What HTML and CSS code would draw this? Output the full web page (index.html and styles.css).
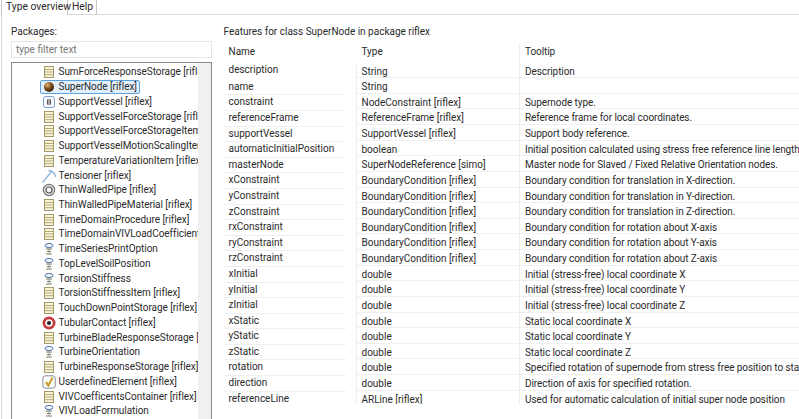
FILE: index.html
```html
<!DOCTYPE html>
<html>
<head>
<meta charset="utf-8">
<title>Type overview</title>
<link rel="stylesheet" href="styles.css">
</head>
<body>
<svg class="defs" width="0" height="0">
  <symbol id="i-store" viewBox="0 0 14 14"><rect x="2.5" y="1.5" width="9" height="11" fill="#f8f4dc" stroke="#a39a68"/><path d="M3 4.5h8M3 7h8M3 9.7h8" stroke="#b5a970"/></symbol>
  <symbol id="i-ball" viewBox="0 0 14 14"><defs><radialGradient id="g1" cx=".35" cy=".3" r=".8"><stop offset="0" stop-color="#e8b878"/><stop offset=".5" stop-color="#7a4a18"/><stop offset="1" stop-color="#2c1a08"/></radialGradient></defs><circle cx="7" cy="7" r="5" fill="url(#g1)"/></symbol>
  <symbol id="i-b" viewBox="0 0 14 14"><rect x="1.5" y="1.5" width="11" height="11" rx="2" fill="#f4f7fc" stroke="#7d9fcc"/><rect x="5" y="4.5" width="4" height="5" fill="#555"/><rect x="6" y="5.5" width="2" height="1" fill="#fff"/><rect x="6" y="7.5" width="2" height="1" fill="#fff"/></symbol>
  <symbol id="i-enum" viewBox="0 0 14 14"><ellipse cx="7" cy="3.5" rx="4" ry="2" fill="#fff" stroke="#3f6fa8"/><path d="M4 7h6M5 9.5h4M4 12h6" stroke="#7b7a50" stroke-width="1.2"/><path d="M7 5.5v6" stroke="#8c9cb0"/></symbol>
  <symbol id="i-tens" viewBox="0 0 14 14"><path d="M.5 13.5L10 2M6.5 1.5c2 0 4 .5 5.5 2.5s1.5 3 1.5 4" stroke="#8fb2d8" stroke-width="1.3" fill="none"/></symbol>
  <symbol id="i-pipe" viewBox="0 0 14 14"><circle cx="7" cy="7" r="5.6" fill="#e4e4e4" stroke="#777" stroke-width="1.2"/><circle cx="7" cy="7" r="3" fill="#fff" stroke="#555" stroke-width="1.2"/></symbol>
  <symbol id="i-tub" viewBox="0 0 14 14"><circle cx="7" cy="7" r="6.5" fill="#c63a3a"/><circle cx="7" cy="7" r="3.8" fill="#f2f2f2"/><circle cx="7" cy="7" r="2" fill="#222"/></symbol>
  <symbol id="i-check" viewBox="0 0 14 14"><rect x=".8" y=".8" width="12.4" height="12.4" rx="2.5" fill="#fbfbfb" stroke="#8a8a8a"/><path d="M4 7l2.3 3.6L10.5 2.6" fill="none" stroke="#c49a18" stroke-width="2"/></symbol>
</svg>
<nav class="tabs"><span class="tab active">Type overview</span><span class="tab">Help</span></nav>
<main class="page">
  <section class="left">
    <div class="label">Packages:</div>
    <div class="filter">type filter text</div>
    <div class="tree-frame">
      <ul class="tree">
        <li><svg class="ico"><use href="#i-store"/></svg><span>SumForceResponseStorage [riflex]</span></li>
        <li class="sel"><div class="sel-box"><svg class="ico"><use href="#i-ball"/></svg><span>SuperNode [riflex]</span></div></li>
        <li><svg class="ico"><use href="#i-b"/></svg><span>SupportVessel [riflex]</span></li>
        <li><svg class="ico"><use href="#i-store"/></svg><span>SupportVesselForceStorage [riflex]</span></li>
        <li><svg class="ico"><use href="#i-store"/></svg><span>SupportVesselForceStorageItem [riflex]</span></li>
        <li><svg class="ico"><use href="#i-store"/></svg><span>SupportVesselMotionScalingItem [riflex]</span></li>
        <li><svg class="ico"><use href="#i-store"/></svg><span>TemperatureVariationItem [riflex]</span></li>
        <li><svg class="ico"><use href="#i-tens"/></svg><span>Tensioner [riflex]</span></li>
        <li><svg class="ico"><use href="#i-pipe"/></svg><span>ThinWalledPipe [riflex]</span></li>
        <li><svg class="ico"><use href="#i-store"/></svg><span>ThinWalledPipeMaterial [riflex]</span></li>
        <li><svg class="ico"><use href="#i-store"/></svg><span>TimeDomainProcedure [riflex]</span></li>
        <li><svg class="ico"><use href="#i-store"/></svg><span>TimeDomainVIVLoadCoefficient [riflex]</span></li>
        <li><svg class="ico"><use href="#i-enum"/></svg><span>TimeSeriesPrintOption</span></li>
        <li><svg class="ico"><use href="#i-enum"/></svg><span>TopLevelSoilPosition</span></li>
        <li><svg class="ico"><use href="#i-enum"/></svg><span>TorsionStiffness</span></li>
        <li><svg class="ico"><use href="#i-store"/></svg><span>TorsionStiffnessItem [riflex]</span></li>
        <li><svg class="ico"><use href="#i-store"/></svg><span>TouchDownPointStorage [riflex]</span></li>
        <li><svg class="ico"><use href="#i-tub"/></svg><span>TubularContact [riflex]</span></li>
        <li><svg class="ico"><use href="#i-store"/></svg><span>TurbineBladeResponseStorage [riflex]</span></li>
        <li><svg class="ico"><use href="#i-enum"/></svg><span>TurbineOrientation</span></li>
        <li><svg class="ico"><use href="#i-store"/></svg><span>TurbineResponseStorage [riflex]</span></li>
        <li><svg class="ico"><use href="#i-check"/></svg><span>UserdefinedElement [riflex]</span></li>
        <li><svg class="ico"><use href="#i-store"/></svg><span>VIVCoefficentsContainer [riflex]</span></li>
        <li><svg class="ico"><use href="#i-enum"/></svg><span>VIVLoadFormulation</span></li>
      </ul>
    </div>
  </section>
  <section class="right">
    <div class="heading">Features for class SuperNode in package riflex</div>
    <div class="cols">
      <ul class="col names">
        <li class="hdr">Name</li><li class="first">description</li><li class="second">name</li>
        <li>constraint</li><li>referenceFrame</li><li>supportVessel</li><li>automaticInitialPosition</li><li>masterNode</li><li>xConstraint</li><li>yConstraint</li><li>zConstraint</li><li>rxConstraint</li><li>ryConstraint</li><li>rzConstraint</li><li>xInitial</li><li>yInitial</li><li>zInitial</li><li>xStatic</li><li>yStatic</li><li>zStatic</li><li>rotation</li><li>direction</li><li>referenceLine</li>
      </ul>
      <ul class="col types">
        <li class="hdr">Type</li><li class="first">String</li><li>String</li><li>NodeConstraint [riflex]</li><li>ReferenceFrame [riflex]</li><li>SupportVessel [riflex]</li><li>boolean</li><li>SuperNodeReference [simo]</li><li>BoundaryCondition [riflex]</li><li>BoundaryCondition [riflex]</li><li>BoundaryCondition [riflex]</li><li>BoundaryCondition [riflex]</li><li>BoundaryCondition [riflex]</li><li>BoundaryCondition [riflex]</li><li>double</li><li>double</li><li>double</li><li>double</li><li>double</li><li>double</li><li>double</li><li>double</li><li>ARLine [riflex]</li>
      </ul>
      <ul class="col tips">
        <li class="hdr">Tooltip</li><li class="first">Description</li><li></li><li>Supernode type.</li><li>Reference frame for local coordinates.</li><li>Support body reference.</li><li>Initial position calculated using stress free reference line length,</li><li>Master node for Slaved / Fixed Relative Orientation nodes.</li><li>Boundary condition for translation in X-direction.</li><li>Boundary condition for translation in Y-direction.</li><li>Boundary condition for translation in Z-direction.</li><li>Boundary condition for rotation about X-axis</li><li>Boundary condition for rotation about Y-axis</li><li>Boundary condition for rotation about Z-axis</li><li>Initial (stress-free) local coordinate X</li><li>Initial (stress-free) local coordinate Y</li><li>Initial (stress-free) local coordinate Z</li><li>Static local coordinate X</li><li>Static local coordinate Y</li><li>Static local coordinate Z</li><li>Specified rotation of supernode from stress free position to stat</li><li>Direction of axis for specified rotation.</li><li>Used for automatic calculation of initial super node position</li>
      </ul>
    </div>
  </section>
</main>
</body>
</html>
```
FILE: styles.css
```css
* { box-sizing: border-box; }
html, body { margin: 0; padding: 0; }
body { width: 799px; height: 419px; overflow: hidden; background: #fff; color: #2a2a2a; font: 10px/14px Roboto, "Open Sans", sans-serif; }
ul { list-style: none; margin: 0; padding: 0; }
.defs { position: absolute; }
.tabs { display: flex; height: 15px; padding-left: 1px; border-bottom: 1px solid #d9d9d9; font-size: 10.3px; }
.tab { padding: 0 3px 0 4px; border-right: 1px solid #c8c8c8; white-space: nowrap; height: 15px; }
.tab.active { border-left: 1px solid #c8c8c8; padding-left: 4px; padding-right: 0; width: 67px; background: #fff; }
.page { display: flex; height: 404px; margin-left: 1px; border-left: 1px solid #d9d9d9; }
.left { width: 213px; padding: 10px 0 0 9px; flex: none; display: flex; flex-direction: column; }
.label { height: 16px; }
.filter { width: 201px; height: 17px; flex: none; border: 1px solid #e6e6e6; color: #777; padding-left: 4px; line-height: 15px; }
.tree-frame { margin-top: 4px; width: 201px; flex: 1; min-height: 0; border: 1px solid #8a8a8a; border-bottom: 0; background: #fff; position: relative; overflow: hidden; }
.tree { width: 186px; padding-top: 2px; letter-spacing: -0.05px; }
.tree li { display: flex; align-items: center; height: 14.74px; white-space: nowrap; padding-left: 29.5px; overflow: hidden; }
.ico { width: 14px; height: 14px; flex: none; margin-right: 3px; }
.tree li.sel { overflow: visible; padding-left: 27.5px; }
.sel-box { display: flex; align-items: center; height: 14px; border: 1px solid #5ba3e0; border-radius: 2px; background: #e2f0fb; padding: 0 2px 0 1px; }
.tree-frame::after { content: ""; position: absolute; right: 0; top: 0; bottom: 0; width: 13px; background: #f0f0f0; }
.right { flex: 1; min-width: 0; padding: 10px 0 15px 8.5px; display: flex; flex-direction: column; }
.heading { height: 18px; flex: none; }
.cols { display: flex; flex: 1; min-height: 0; overflow: hidden; }
.col { flex: none; }
.names { width: 132px; }
.names li { height: 15.6px; line-height: 13px; padding-left: 5px; margin-right: 10px; border-bottom: 1px solid #f0f0f0; white-space: nowrap; }
.names .hdr { height: 20px; line-height: 17px; border: 0; }
.names .first { height: 16.8px; border: 0; }
.types { width: 163.5px; }
.tips { width: 280px; letter-spacing: -0.08px; }
.types li, .tips li { height: 15.63px; line-height: 15px; padding-top: 1px; padding-left: 5px; white-space: nowrap; overflow: hidden; border-bottom: 1px solid #f0f0f0; border-left: 1px solid #eeeeee; }
.types .hdr, .tips .hdr { height: 19.6px; line-height: 18px; padding-top: 0; border-bottom: 0; }
.types .hdr { border-left-color: transparent; }
```
